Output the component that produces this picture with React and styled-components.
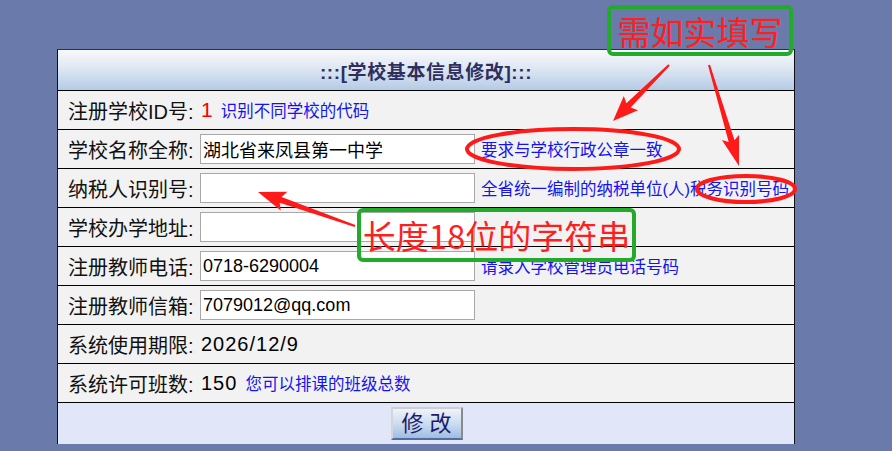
import React from 'react';
import styled, { createGlobalStyle } from 'styled-components';

const GlobalStyle = createGlobalStyle`
  html, body {
    margin: 0;
    padding: 0;
    background: #6a7aab;
  }
  body {
    font-family: "Liberation Sans", "Noto Sans CJK SC", sans-serif;
    width: 892px;
    height: 451px;
    overflow: hidden;
    position: relative;
  }
`;

const rows = [
  { label: '注册学校ID号:', value: '1', red: true, hint: '识别不同学校的代码' },
  { label: '学校名称全称:', input: '湖北省来凤县第一中学', hint: '要求与学校行政公章一致' },
  { label: '纳税人识别号:', input: '', hint: '全省统一编制的纳税单位(人)税务识别号码' },
  { label: '学校办学地址:', input: '' },
  { label: '注册教师电话:', input: '0718-6290004', hint: '请录入学校管理员电话号码' },
  { label: '注册教师信箱:', input: '7079012@qq.com' },
  { label: '系统使用期限:', value: '2026/12/9' },
  { label: '系统许可班数:', value: '150', hint: '您可以排课的班级总数' },
];

function arrowPoints([tx, ty], [px, py], headLen, headW, w0, w1) {
  const dx = px - tx;
  const dy = py - ty;
  const len = Math.hypot(dx, dy);
  const ux = dx / len;
  const uy = dy / len;
  const nx = -uy;
  const ny = ux;
  const bx = px - ux * headLen;
  const by = py - uy * headLen;
  const bbx = px - ux * headLen * 1.15;
  const bby = py - uy * headLen * 1.15;
  const p = [
    [tx + nx * w0 / 2, ty + ny * w0 / 2],
    [bx + nx * w1 / 2, by + ny * w1 / 2],
    [bbx + nx * headW / 2, bby + ny * headW / 2],
    [px, py],
    [bbx - nx * headW / 2, bby - ny * headW / 2],
    [bx - nx * w1 / 2, by - ny * w1 / 2],
    [tx - nx * w0 / 2, ty - ny * w0 / 2],
  ];
  return p.map(([x, y]) => `${x.toFixed(1)},${y.toFixed(1)}`).join(' ');
}

function App() {
  return (
    <>
      <GlobalStyle />
      <Page>
        <Panel>
          <Header>:::[学校基本信息修改]:::</Header>
          {rows.map((r) => (
            <Row key={r.label}>
              <Label>{r.label}</Label>
              <Cell>
                {r.input !== undefined && <Field defaultValue={r.input} />}
                {r.value && <Value $red={r.red}>{r.value}</Value>}
                {r.hint && <Hint $gap={r.input !== undefined ? 6 : 8}>{r.hint}</Hint>}
              </Cell>
            </Row>
          ))}
          <Footer>
            <Button>修 改</Button>
          </Footer>
        </Panel>
      </Page>

      <Overlay>
        <svg width="892" height="451" viewBox="0 0 892 451">
          <g fill="#ff1a1a">
            <polygon points={arrowPoints([669, 65], [613, 121], 22, 20, 2, 6)} />
            <polygon points={arrowPoints([709, 65], [739, 166], 26, 18, 2, 6)} />
            <polygon points={arrowPoints([355, 226], [258, 192], 24, 20, 2, 6)} />
          </g>
          <g fill="none" stroke="#ff1a1a" strokeWidth="4">
            <ellipse cx="573" cy="149" rx="106" ry="20" />
            <ellipse cx="746" cy="189" rx="49" ry="13" />
          </g>
        </svg>
        <Note $x={607} $y={5} $w={186} $h={51}>需如实填写</Note>
        <Note $x={357} $y={208} $w={279} $h={54}>长度18位的字符串</Note>
      </Overlay>
    </>
  );
}

const Page = styled.div`
  padding: 49px 0 0 57px;
`;

const Panel = styled.div`
  width: 736px;
  border-left: 1px solid #111;
  border-right: 1px solid #111;
  border-top: 1px solid #2a2f55;
`;

const Header = styled.div`
  height: 40px;
  border-bottom: 1px solid #000;
  background: linear-gradient(to bottom, #f8f9fc 0%, #dbe5f2 50%, #b4cbe5 100%);
  display: flex;
  align-items: center;
  justify-content: center;
  color: #2e2f5e;
  font-weight: bold;
  font-size: 19px;
  letter-spacing: 0.6px;
`;

const Row = styled.div`
  height: 38px;
  border-bottom: 1px solid #000;
  background: #f2f2f2;
  display: flex;
  align-items: center;
`;

const Label = styled.div`
  width: 132px;
  padding-left: 10px;
  font-size: 20px;
  color: #111;
  white-space: nowrap;
`;

const Cell = styled.div`
  display: flex;
  align-items: center;
  white-space: nowrap;
`;

const Field = styled.input`
  box-sizing: border-box;
  width: 275px;
  height: 30px;
  margin: 0;
  padding: 0 2px;
  border: 1px solid #a8a8a8;
  background: #fff;
  font-family: "Liberation Sans", "Noto Sans CJK SC", sans-serif;
  font-size: 18px;
  color: #000;
  outline: none;
`;

const Value = styled.span`
  padding-left: 1px;
  font-size: ${(p) => (p.$red ? '21px' : '20px')};
  color: ${(p) => (p.$red ? '#ff0000' : '#000')};
  letter-spacing: ${(p) => (p.$red ? '0' : '1px')};
`;

const Hint = styled.span`
  margin-left: ${(p) => p.$gap}px;
  font-size: 16.5px;
  color: #1414f0;
`;

const Footer = styled.div`
  height: 41px;
  background: #e1e7f8;
  display: flex;
  justify-content: center;
  align-items: flex-start;
  padding-top: 4px;
  box-sizing: border-box;
`;

const Button = styled.button`
  box-sizing: border-box;
  width: 72px;
  height: 33px;
  margin-left: 1px;
  padding: 0;
  border-style: solid;
  border-width: 2px;
  border-color: #cfcfcf #8a8a8a #4f6fa0 #d6d6d6;
  background: linear-gradient(to bottom, #eef3fa 0%, #c9daf0 55%, #9fbde3 100%);
  color: #1c1c6a;
  font-family: "Liberation Sans", "Noto Sans CJK SC", sans-serif;
  font-size: 22px;
  line-height: 1;
`;

const Overlay = styled.div`
  position: absolute;
  top: 0;
  left: 0;
  width: 892px;
  height: 451px;
  pointer-events: none;

  svg {
    position: absolute;
    top: 0;
    left: 0;
  }
`;

const Note = styled.div`
  position: absolute;
  left: ${(p) => p.$x}px;
  top: ${(p) => p.$y}px;
  width: ${(p) => p.$w}px;
  height: ${(p) => p.$h}px;
  box-sizing: border-box;
  border: 4px solid #22aa2a;
  border-radius: 6px;
  display: flex;
  align-items: center;
  justify-content: center;
  color: #ff1f1f;
  font-size: 33px;
  font-family: "Noto Sans CJK SC", sans-serif;
  white-space: nowrap;
`;

export default App;
